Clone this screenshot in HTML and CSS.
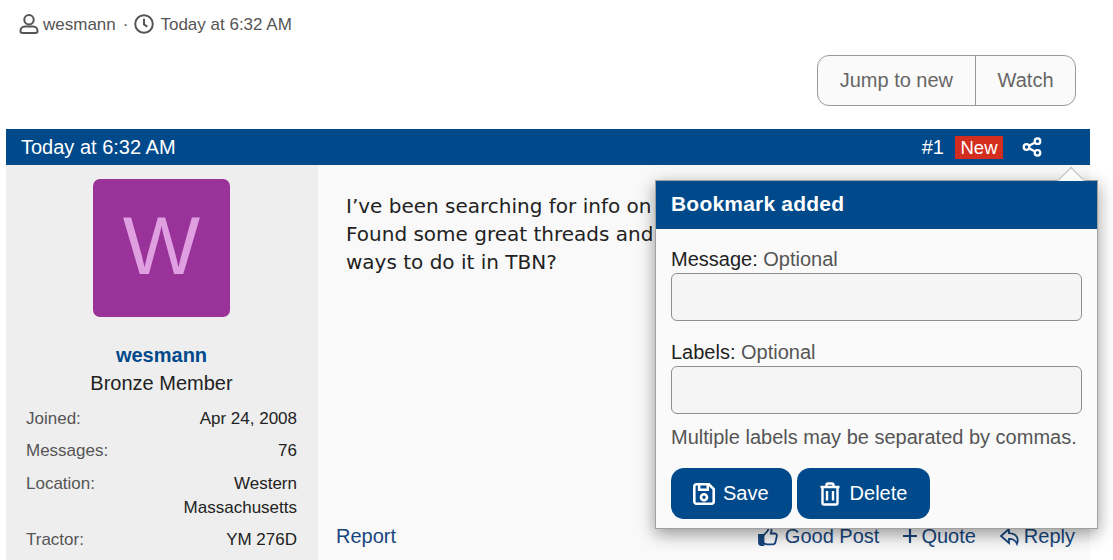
FILE: index.html
```html
<!DOCTYPE html>
<html lang="en">
<head>
    <meta charset="UTF-8">
    <meta name="viewport" content="width=device-width, initial-scale=1.0">
    <title>Thread</title>
    <link rel="stylesheet" href="styles.css">
</head>
<body>
<div class="main">

    <div class="thread-meta">
        <svg class="meta-icon" viewBox="0 0 20 20" width="20" height="20">
            <circle cx="10" cy="5.800" r="4.700"/>
            <path d="M5.800 12.400h8.400a4.300 4.300 0 0 1 4.300 4.300v0.300a1.900 1.900 0 0 1-1.900 1.900H3.400a1.900 1.900 0 0 1-1.900-1.900v-0.300a4.300 4.300 0 0 1 4.300-4.300z"/>
        </svg>
        <span>wesmann</span>
        <span class="dot">·</span>
        <svg class="meta-icon clock" viewBox="0 0 20 20" width="20" height="20">
            <circle cx="10" cy="10" r="8.800"/>
            <path d="M10 4.800v5.600l3.400 2.400"/>
        </svg>
        <span>Today at 6:32 AM</span>
    </div>

    <div class="thread-actions">
        <div class="button-group">
            <a href="#">Jump to new</a>
            <a href="#">Watch</a>
        </div>
    </div>

    <div class="post-bar">
        <span>Today at 6:32 AM</span>
        <div class="post-bar-right">
            <span>#1</span>
            <span class="badge">New</span>
            <svg class="share-icon" viewBox="0 0 20 20" width="20" height="20">
                <circle cx="15.500" cy="4.200" r="2.800"/>
                <circle cx="4.500" cy="10" r="2.800"/>
                <circle cx="15.500" cy="15.800" r="2.800"/>
                <path d="M7 8.700l6-3.200M7 11.300l6 3.200"/>
            </svg>
        </div>
    </div>

    <div class="post">
        <div class="sidebar">
            <div class="avatar">W</div>
            <a class="username" href="#">wesmann</a>
            <div class="user-title">Bronze Member</div>
            <dl class="user-info">
                <div><dt>Joined:</dt><dd>Apr 24, 2008</dd></div>
                <div><dt>Messages:</dt><dd>76</dd></div>
                <div><dt>Location:</dt><dd>Western Massachusetts</dd></div>
                <div><dt>Tractor:</dt><dd>YM 276D</dd></div>
            </dl>
        </div>

        <div class="post-main">
            <p class="post-text">I’ve been searching for info on<br>Found some great threads and<br>ways to do it in TBN?</p>
            <div class="post-footer">
                <a href="#">Report</a>
                <div class="post-links">
                    <a href="#" class="like">
                        <svg viewBox="0 0 20 20" width="20" height="20">
                            <path class="solid" d="M1 9h4.500v10H3a2 2 0 0 1-2-2z"/>
                            <path d="M5.500 9.500l4-4.500c0.800-1 1-2 1-3.500 1.800-0.500 3.300 0.800 3 3l-0.600 3h3.600c1.700 0 2.700 1.300 2.300 2.800l-1.400 6c-0.300 1.300-1.200 2-2.500 2H9c-1.500 0-2.500-0.500-3.500-1.200"/>
                        </svg>
                        Good Post
                    </a>
                    <a href="#" class="tight">
                        <svg viewBox="0 0 16 20" width="16" height="20"><path class="thick" d="M8 3v14M1 10h14"/></svg>
                        Quote
                    </a>
                    <a href="#" class="tight">
                        <svg viewBox="0 0 22 20" width="22" height="20">
                            <path d="M10 3L2 10l8 7v-4.200c4 0 6.500 1 8 5 1.800-4.500 0.500-10-8-10.600z"/>
                        </svg>
                        Reply
                    </a>
                </div>
            </div>
        </div>

        <div class="popup">
            <div class="popup-arrow"></div>
            <h3>Bookmark added</h3>
            <div class="popup-body">
                <label>Message: <span>Optional</span></label>
                <input type="text">
                <label class="second">Labels: <span>Optional</span></label>
                <input type="text">
                <p class="hint">Multiple labels may be separated by commas.</p>
                <div class="popup-buttons">
                    <button>
                        <svg viewBox="0.800 0.800 20.400 20.400" width="22" height="22">
                            <path d="M2 4a2 2 0 0 1 2-2h11.500L20 6.500V18a2 2 0 0 1-2 2H4a2 2 0 0 1-2-2z"/>
                            <path d="M6.500 2v5h8V2"/>
                            <circle cx="11" cy="14" r="2.800"/>
                        </svg>
                        Save
                    </button>
                    <button class="delete">
                        <svg viewBox="0.500 0 21 24" width="22" height="24">
                            <path d="M1.500 5h19M7.500 5V3a1.500 1.500 0 0 1 1.500-1.500h4A1.500 1.500 0 0 1 14.500 3v2"/>
                            <path d="M3.500 5v16a1.500 1.500 0 0 0 1.500 1.500h12a1.500 1.500 0 0 0 1.500-1.500V5"/>
                            <path d="M8 9v9.500M14 9v9.500"/>
                        </svg>
                        Delete
                    </button>
                </div>
            </div>
        </div>
    </div>
</div>
</body>
</html>
```

FILE: styles.css
```css
html, body {
    height: 100%;
}

body {
    margin: 0;
    padding: 0;
    font-family: "Liberation Sans", Arial, sans-serif;
    font-size: 20px;
    color: #222;
    background: #fff;
    overflow: hidden;
}

a {
    color: inherit;
    text-decoration: none;
}

.main {
    padding: 0 23px 0 6px;
}

.thread-meta {
    display: flex;
    align-items: center;
    height: 24px;
    padding: 12px 0 0 13px;
    font-size: 17px;
    color: #555;
}

.thread-meta span {
    position: relative;
    top: 1px;
}

.meta-icon {
    fill: none;
    stroke: #555;
    stroke-width: 2;
    margin-right: 4px;
    flex-shrink: 0;
}

.meta-icon.clock {
    margin-right: 6px;
}

.dot {
    margin: 0 6px 0 7px;
}

.thread-actions {
    display: flex;
    justify-content: flex-end;
    padding: 19px 14px 23px 0;
}

.button-group {
    display: flex;
    border: 1px solid #999;
    border-radius: 12px;
    background: #fafafa;
    color: #666;
    line-height: 49px;
}

.button-group a {
    padding: 0 22px;
}

.button-group a + a {
    border-left: 1px solid #999;
    padding: 0 21.500px;
}

.post-bar {
    display: flex;
    justify-content: space-between;
    align-items: center;
    height: 36px;
    padding: 0 48px 0 15px;
    background: #004a8b;
    color: #fff;
}

.post-bar-right {
    display: flex;
    align-items: center;
}

.badge {
    margin-left: 11px;
    padding: 0 5.500px;
    height: 23px;
    line-height: 23px;
    font-size: 18.500px;
    background: #d32d1f;
}

.share-icon {
    margin-left: 19px;
    fill: none;
    stroke: #fff;
    stroke-width: 2.200;
}

.post {
    display: flex;
    position: relative;
    background: #f9f9f9;
}

.sidebar {
    width: 271px;
    padding: 14px 21px 9px 20px;
    background: #eee;
    text-align: center;
    flex-shrink: 0;
}

.avatar {
    width: 137px;
    height: 138px;
    margin: 0 0 24px 67px;
    border-radius: 7px;
    background: #993399;
    color: #df9fe0;
    font-size: 82px;
    line-height: 134px;
}

.username {
    display: block;
    line-height: 28px;
    font-weight: bold;
    color: #004a8b;
}

.user-title {
    line-height: 28px;
}

.user-info {
    margin: 9.500px 0 0;
    font-size: 17px;
    line-height: 24px;
}

.user-info div {
    display: flex;
    justify-content: space-between;
    margin-bottom: 8.500px;
}

.user-info div:last-child {
    margin-bottom: 0;
}

.user-info dt {
    color: #555;
}

.user-info dd {
    margin: 0;
    max-width: 130px;
    text-align: right;
}

.post-main {
    flex: 1;
    display: flex;
    flex-direction: column;
    padding: 0 15px 13px 18px;
}

.post-text {
    flex: 1;
    margin: 27px 0 0 10px;
    font-family: "DejaVu Sans", Verdana, sans-serif;
    font-size: 20px;
    line-height: 28px;
    color: #222;
    white-space: nowrap;
}

.post-footer {
    display: flex;
    justify-content: space-between;
    line-height: 24px;
    color: #17467e;
}

.post-links {
    display: flex;
    gap: 23px;
}

.post-links a {
    display: flex;
    align-items: center;
    gap: 3px;
}

.post-links a.like {
    gap: 7px;
}

.post-links svg {
    fill: none;
    stroke: #17467e;
    stroke-width: 1.800;
}

.post-links svg .solid {
    fill: #17467e;
}

.post-links svg .thick {
    stroke-width: 2.200;
}

.popup {
    position: absolute;
    top: 15px;
    right: -8px;
    width: 441px;
    border: 1px solid #a0a0a0;
    background: #fafafa;
    box-shadow: 0 5px 16px rgba(0, 0, 0, 0.4);
}

.popup-arrow {
    position: absolute;
    top: -10px;
    right: 16px;
    width: 19px;
    height: 19px;
    background: #fafafa;
    border-top: 1px solid #bbb;
    border-left: 1px solid #bbb;
    transform: rotate(45deg);
}

.popup h3 {
    position: relative;
    margin: 0;
    padding: 0 15px 2px;
    line-height: 46px;
    font-size: 21px;
    letter-spacing: 0.200px;
    background: #004a8b;
    color: #fff;
}

.popup-body {
    padding: 17px 15px 9px;
}

.popup label {
    display: block;
    line-height: 26px;
    margin-bottom: 1px;
}

.popup label span {
    color: #555;
}

.popup label.second {
    margin-top: 18px;
}

.popup input {
    display: block;
    width: 100%;
    height: 48px;
    box-sizing: border-box;
    border: 1px solid #8f8f8f;
    border-radius: 6px;
    background: #f5f5f5;
}

.hint {
    margin: 11px 0 19px;
    font-size: 20px;
    line-height: 24px;
    color: #555;
}

.popup-buttons {
    display: flex;
    gap: 5px;
}

.popup-buttons button {
    display: flex;
    align-items: center;
    gap: 8px;
    height: 51px;
    padding: 0 23px 0 22px;
    border: none;
    border-radius: 13px;
    background: #004a8b;
    color: #fff;
    font-family: inherit;
    font-size: 20px;
}

.popup-buttons button.delete {
    gap: 9px;
}

.popup-buttons svg {
    fill: none;
    stroke: #fff;
    stroke-width: 2.400;
}
```
